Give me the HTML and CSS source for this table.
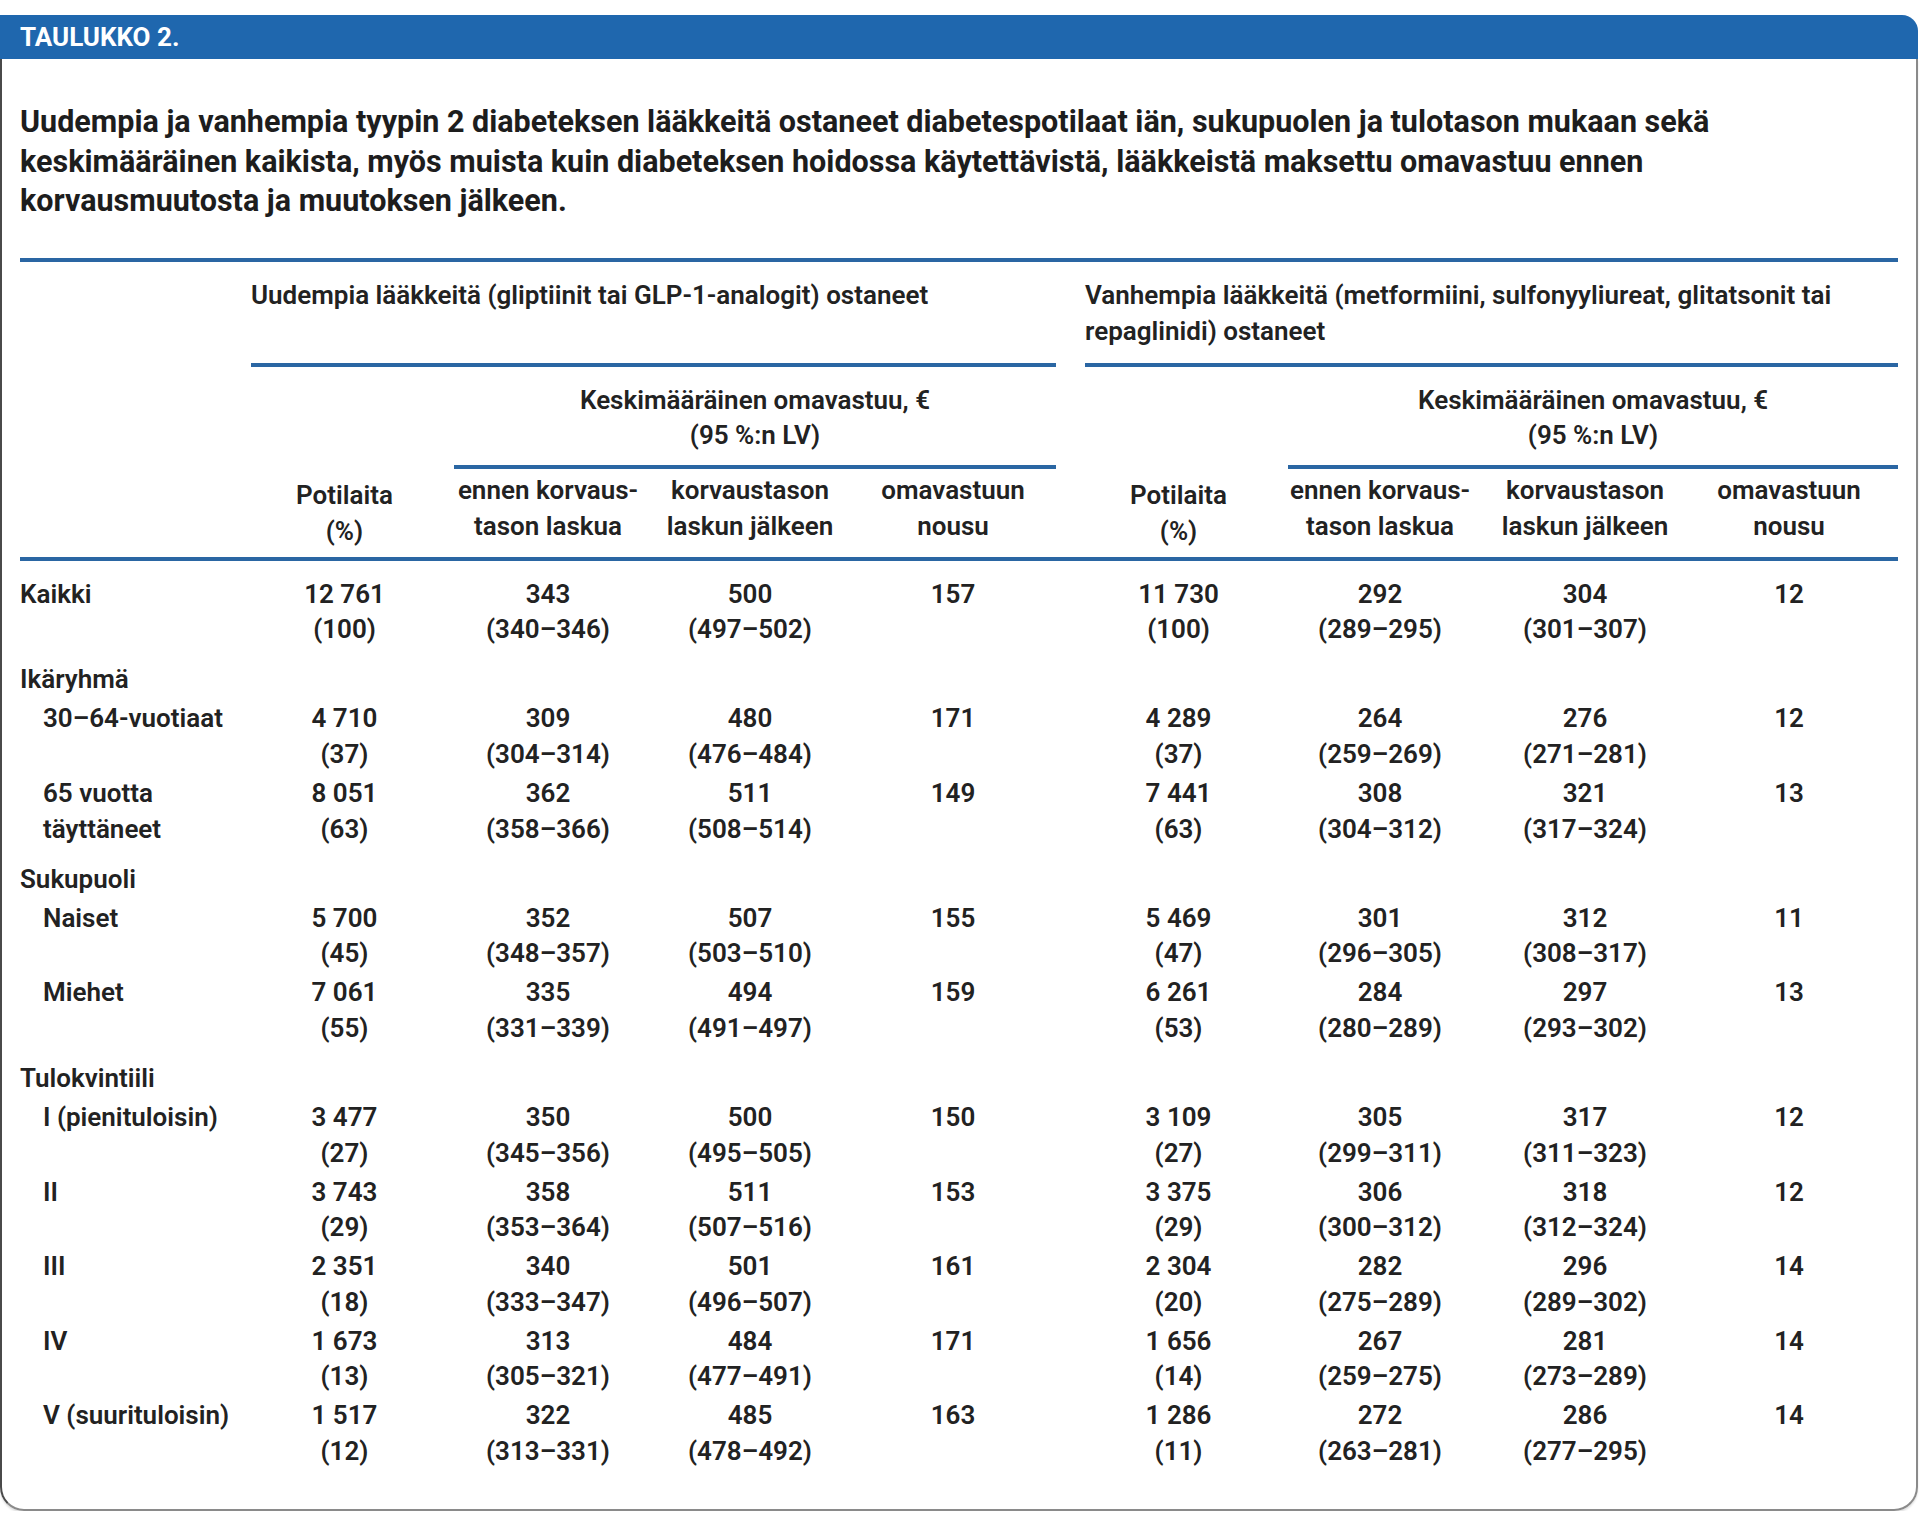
FILE: index.html
```html
<!DOCTYPE html>
<html lang="fi">
<head>
<meta charset="utf-8">
<title>Taulukko 2</title>
<link rel="stylesheet" href="styles.css">
</head>
<body>
<div class="card">
  <div class="bar">TAULUKKO 2.</div>
  <div class="panel">
    <h1 class="title">Uudempia ja vanhempia tyypin 2 diabeteksen lääkkeitä ostaneet diabetespotilaat iän, sukupuolen ja tulotason mukaan sekä<br>keskimääräinen kaikista, myös muista kuin diabeteksen hoidossa käytettävistä, lääkkeistä maksettu omavastuu ennen<br>korvausmuutosta ja muutoksen jälkeen.</h1>
    <table class="tbl">
      <colgroup>
        <col class="w-label"><col class="w-c1"><col class="w-c2"><col class="w-c3"><col class="w-c4"><col class="w-gap"><col class="w-c5"><col class="w-c6"><col class="w-c7"><col class="w-c8">
      </colgroup>
      <thead>
        <tr class="hr1">
          <th class="hlabel rb" rowspan="3"></th>
          <th class="grp rule" colspan="4">Uudempia lääkkeitä (gliptiinit tai GLP-1-analogit) ostaneet</th>
          <th class="hgap rb" rowspan="3"></th>
          <th class="grp rule" colspan="4">Vanhempia lääkkeitä (metformiini, sulfonyyliureat, glitatsonit tai<br>repaglinidi) ostaneet</th>
        </tr>
        <tr class="hr2">
          <th class="pot pl rb" rowspan="2">Potilaita<br>(%)</th>
          <th class="kesk rule" colspan="3">Keskimääräinen omavastuu, €<br>(95 %:n LV)</th>
          <th class="pot pr rb" rowspan="2">Potilaita<br>(%)</th>
          <th class="kesk rule" colspan="3">Keskimääräinen omavastuu, €<br>(95 %:n LV)</th>
        </tr>
        <tr class="hr3">
          <th class="sub rb c2">ennen korvaus-<br>tason laskua</th>
          <th class="sub rb">korvaustason<br>laskun jälkeen</th>
          <th class="sub rb">omavastuun<br>nousu</th>
          <th class="sub rb c6">ennen korvaus-<br>tason laskua</th>
          <th class="sub rb">korvaustason<br>laskun jälkeen</th>
          <th class="sub rb c8">omavastuun<br>nousu</th>
        </tr>
      </thead>
      <tbody>
        <tr class="first">
          <td class="lab">Kaikki</td>
          <td class="n c1">12 761<br>(100)</td><td class="n c2">343<br>(340–346)</td><td class="n">500<br>(497–502)</td><td class="n">157</td>
          <td></td>
          <td class="n c5">11 730<br>(100)</td><td class="n c6">292<br>(289–295)</td><td class="n">304<br>(301–307)</td><td class="n c8">12</td>
        </tr>
        <tr class="grow"><td class="lab" colspan="10">Ikäryhmä</td></tr>
        <tr>
          <td class="lab ind">30–64-vuotiaat</td>
          <td class="n c1">4 710<br>(37)</td><td class="n c2">309<br>(304–314)</td><td class="n">480<br>(476–484)</td><td class="n">171</td>
          <td></td>
          <td class="n c5">4 289<br>(37)</td><td class="n c6">264<br>(259–269)</td><td class="n">276<br>(271–281)</td><td class="n c8">12</td>
        </tr>
        <tr>
          <td class="lab ind">65 vuotta<br>täyttäneet</td>
          <td class="n c1">8 051<br>(63)</td><td class="n c2">362<br>(358–366)</td><td class="n">511<br>(508–514)</td><td class="n">149</td>
          <td></td>
          <td class="n c5">7 441<br>(63)</td><td class="n c6">308<br>(304–312)</td><td class="n">321<br>(317–324)</td><td class="n c8">13</td>
        </tr>
        <tr class="grow"><td class="lab" colspan="10">Sukupuoli</td></tr>
        <tr>
          <td class="lab ind">Naiset</td>
          <td class="n c1">5 700<br>(45)</td><td class="n c2">352<br>(348–357)</td><td class="n">507<br>(503–510)</td><td class="n">155</td>
          <td></td>
          <td class="n c5">5 469<br>(47)</td><td class="n c6">301<br>(296–305)</td><td class="n">312<br>(308–317)</td><td class="n c8">11</td>
        </tr>
        <tr>
          <td class="lab ind">Miehet</td>
          <td class="n c1">7 061<br>(55)</td><td class="n c2">335<br>(331–339)</td><td class="n">494<br>(491–497)</td><td class="n">159</td>
          <td></td>
          <td class="n c5">6 261<br>(53)</td><td class="n c6">284<br>(280–289)</td><td class="n">297<br>(293–302)</td><td class="n c8">13</td>
        </tr>
        <tr class="grow"><td class="lab" colspan="10">Tulokvintiili</td></tr>
        <tr>
          <td class="lab ind">I (pienituloisin)</td>
          <td class="n c1">3 477<br>(27)</td><td class="n c2">350<br>(345–356)</td><td class="n">500<br>(495–505)</td><td class="n">150</td>
          <td></td>
          <td class="n c5">3 109<br>(27)</td><td class="n c6">305<br>(299–311)</td><td class="n">317<br>(311–323)</td><td class="n c8">12</td>
        </tr>
        <tr>
          <td class="lab ind">II</td>
          <td class="n c1">3 743<br>(29)</td><td class="n c2">358<br>(353–364)</td><td class="n">511<br>(507–516)</td><td class="n">153</td>
          <td></td>
          <td class="n c5">3 375<br>(29)</td><td class="n c6">306<br>(300–312)</td><td class="n">318<br>(312–324)</td><td class="n c8">12</td>
        </tr>
        <tr>
          <td class="lab ind">III</td>
          <td class="n c1">2 351<br>(18)</td><td class="n c2">340<br>(333–347)</td><td class="n">501<br>(496–507)</td><td class="n">161</td>
          <td></td>
          <td class="n c5">2 304<br>(20)</td><td class="n c6">282<br>(275–289)</td><td class="n">296<br>(289–302)</td><td class="n c8">14</td>
        </tr>
        <tr>
          <td class="lab ind">IV</td>
          <td class="n c1">1 673<br>(13)</td><td class="n c2">313<br>(305–321)</td><td class="n">484<br>(477–491)</td><td class="n">171</td>
          <td></td>
          <td class="n c5">1 656<br>(14)</td><td class="n c6">267<br>(259–275)</td><td class="n">281<br>(273–289)</td><td class="n c8">14</td>
        </tr>
        <tr>
          <td class="lab ind">V (suurituloisin)</td>
          <td class="n c1">1 517<br>(12)</td><td class="n c2">322<br>(313–331)</td><td class="n">485<br>(478–492)</td><td class="n">163</td>
          <td></td>
          <td class="n c5">1 286<br>(11)</td><td class="n c6">272<br>(263–281)</td><td class="n">286<br>(277–295)</td><td class="n c8">14</td>
        </tr>
      </tbody>
    </table>
  </div>
</div>
</body>
</html>
```
FILE: styles.css
```css
html, body {
  margin: 0;
  padding: 0;
  background: #ffffff;
}

body {
  font-family: Roboto, "Liberation Sans", sans-serif;
  color: #222222;
}

.card {
  margin-top: 15px;
  width: 1918px;
}

.bar {
  height: 44px;
  line-height: 45px;
  padding-left: 20px;
  background: #1f67ae;
  color: #ffffff;
  font-weight: 700;
  font-size: 26px;
  border-radius: 0 16px 0 0;
}

.panel {
  border-left: 2px solid #4a4a4a;
  border-right: 2px solid #8a8a8a;
  border-bottom: 2px solid #8a8a8a;
  border-radius: 0 0 24px 24px;
  padding: 43px 18px 36px 18px;
  box-shadow: 0 2px 2px rgba(0, 0, 0, 0.12);
}

.title {
  margin: 0 0 37px 0;
  font-size: 30.5px;
  line-height: 39.5px;
  font-weight: 700;
  color: #1d1d1d;
  white-space: nowrap;
}

.tbl {
  border-collapse: separate;
  border-spacing: 0;
  border-top: 4px solid #2a66a3;
  table-layout: fixed;
  width: 1878px;
  font-size: 26px;
  font-weight: 600;
  line-height: 35.5px;
}

.w-label { width: 231px; }
.w-c1 { width: 203px; }
.w-c2 { width: 196px; }
.w-c3 { width: 200px; }
.w-c4 { width: 206px; }
.w-gap { width: 29px; }
.w-c5 { width: 203px; }
.w-c6 { width: 192px; }
.w-c7 { width: 210px; }
.w-c8 { width: 208px; }

.tbl th {
  font-weight: 600;
  padding: 0;
  vertical-align: top;
}

.tbl td {
  padding: 0 0 3.6px 0;
  vertical-align: top;
  white-space: nowrap;
}

.rule,
.rb {
  border-bottom: 4px solid #2a66a3;
}

.grp {
  text-align: left;
  padding: 16.5px 0 13.5px 0 !important;
}

.kesk {
  text-align: center;
  padding: 16px 0 11.2px 0 !important;
}

.sub {
  text-align: center;
  padding: 4.5px 0 12.8px 0 !important;
}

.pot {
  text-align: center;
  vertical-align: bottom !important;
  padding: 0 16px 7.5px 0 !important;
}

.sub.c2, .sub.c6 {
  padding-right: 8px !important;
}

.sub.c8 {
  padding-right: 10px !important;
}

.n {
  text-align: center;
}

.n.c1, .n.c5 {
  padding-right: 16px;
}

.n.c2, .n.c6 {
  padding-right: 8px;
}

.n.c8 {
  padding-right: 10px;
}

.lab {
  text-align: left;
}

.lab.ind {
  padding-left: 23px;
}

.tbl tr.first td {
  padding-top: 15.8px;
}

.tbl tr.grow td {
  padding-top: 11px;
}
```
